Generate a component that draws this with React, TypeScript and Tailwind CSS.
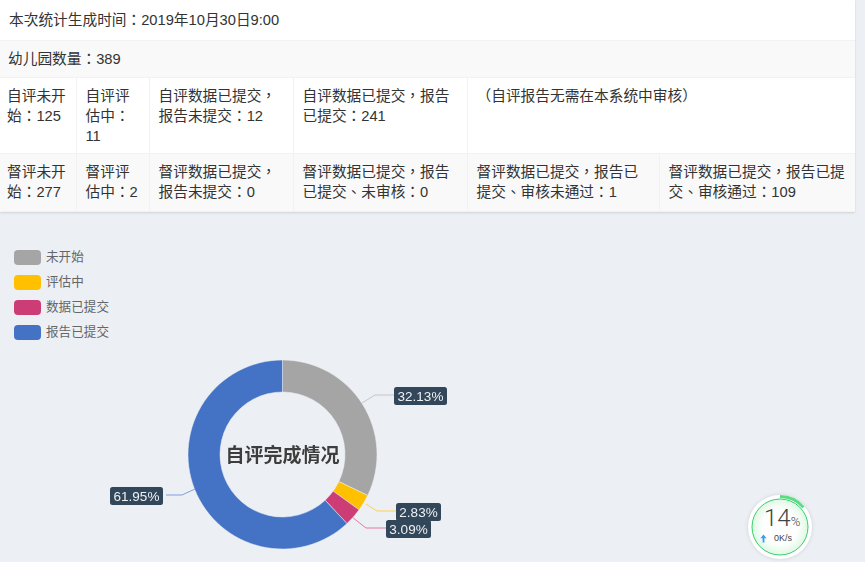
import React from "react";

const FONT = '"Liberation Sans", "Noto Sans CJK TC", sans-serif';
const CX = 282.5;
const CY = 454.5;
const R1 = 94.5;
const R0 = 62.5;

const slices = [
  { v: 32.13, c: "#a5a5a5" },
  { v: 2.83, c: "#ffc000" },
  { v: 3.09, c: "#cc3d76" },
  { v: 61.95, c: "#4472c4" },
];

function pt(r: number, pct: number) {
  const a = (pct / 100) * Math.PI * 2;
  return [CX + r * Math.sin(a), CY - r * Math.cos(a)];
}

function slicePath(from: number, to: number) {
  const large = to - from > 50 ? 1 : 0;
  const [a, b] = pt(R1, from);
  const [c, d] = pt(R1, to);
  const [e, f] = pt(R0, to);
  const [g, h] = pt(R0, from);
  return `M${a} ${b}A${R1} ${R1} 0 ${large} 1 ${c} ${d}L${e} ${f}A${R0} ${R0} 0 ${large} 0 ${g} ${h}Z`;
}

const legend = [
  { t: "未开始", c: "bg-[#a5a5a5]" },
  { t: "评估中", c: "bg-[#ffc000]" },
  { t: "数据已提交", c: "bg-[#cc3d76]" },
  { t: "报告已提交", c: "bg-[#4472c4]" },
];

const labels = [
  { t: "32.13%", x: 394, y: 387, w: 53, line: "M362 403L375 395H394", c: "#c4c4c4" },
  { t: "2.83%", x: 396, y: 503, w: 45, line: "M366 504L377 511H396", c: "#ffd04d" },
  { t: "3.09%", x: 386, y: 520, w: 45, line: "M352 517L366 528H386", c: "#e07aa2" },
  { t: "61.95%", x: 110, y: 487, w: 53, line: "M195 489L182 495H166", c: "#7f9fdb" },
];

function Td({ children, colSpan }: { children?: React.ReactNode; colSpan?: number }) {
  return (
    <td colSpan={colSpan} className="border border-[#f1f2f4] pb-[5px] pl-[9px] pr-2 pt-[8px] align-top leading-5 first:border-l-0 first:pl-[7px] last:border-r-0">
      {children}
    </td>
  );
}

export default function App() {
  let acc = 0;
  return (
    <div className="relative h-[562px] w-[865px] overflow-hidden bg-[#ecf0f5] text-[14.7px] text-[#333]" style={{ fontFamily: FONT }}>
      <table className="w-[855px] table-fixed border-collapse bg-white shadow-[0_1px_2px_rgba(0,0,0,0.12)]">
        <colgroup>
          <col className="w-[76px]" />
          <col className="w-[73px]" />
          <col className="w-[144px]" />
          <col className="w-[174px]" />
          <col className="w-[192px]" />
          <col className="w-[196px]" />
        </colgroup>
        <tbody>
          <tr className="h-[40px]">
            <td colSpan={6} className="border-b border-[#f1f2f4] pl-[9px] align-middle leading-5">本次统计生成时间：2019年10月30日9:00</td>
          </tr>
          <tr className="h-[37px] bg-[#f9f9f9]">
            <td colSpan={6} className="border-b border-[#f1f2f4] pl-[8px] align-middle leading-5">幼儿园数量：389</td>
          </tr>
          <tr className="h-[76px]">
            <Td>自评未开始：125</Td>
            <Td>自评评估中：11</Td>
            <Td>自评数据已提交，报告未提交：12</Td>
            <Td>自评数据已提交，报告已提交：241</Td>
            <Td colSpan={2}>（自评报告无需在本系统中审核）</Td>
          </tr>
          <tr className="h-[58px] bg-[#f9f9f9]">
            <Td>督评未开始：277</Td>
            <Td>督评评估中：2</Td>
            <Td>督评数据已提交，报告未提交：0</Td>
            <Td>督评数据已提交，报告已提交、未审核：0</Td>
            <Td>督评数据已提交，报告已提交、审核未通过：1</Td>
            <Td>督评数据已提交，报告已提交、审核通过：109</Td>
          </tr>
        </tbody>
      </table>

      <div className="ml-[14px] mt-[38px] flex flex-col gap-[9px]">
        {legend.map((l) => (
          <div key={l.t} className="flex h-[16px] items-center gap-[5px] text-[12.6px] text-[#666]">
            <span className={`h-[15px] w-[27px] rounded-[4px] ${l.c}`} />
            <span>{l.t}</span>
          </div>
        ))}
      </div>

      <svg className="absolute left-0 top-0 blur-[0.3px]" width="865" height="562">
        {slices.map((s) => {
          const from = acc;
          acc += s.v;
          return <path key={s.c} d={slicePath(from, acc)} fill={s.c} stroke="#ecf0f5" strokeWidth="0.5" />;
        })}
        {labels.map((l) => (
          <g key={l.t}>
            <path d={l.line} fill="none" stroke={l.c} strokeWidth="1" />
            <rect x={l.x} y={l.y} width={l.w} height="18" rx="2.5" fill="#33475b" />
            <text x={l.x + l.w / 2} y={l.y + 14} textAnchor="middle" fontSize="13.5" fill="#eef0f3" fontFamily={FONT}>
              {l.t}
            </text>
          </g>
        ))}
        <text x={CX} y="462" textAnchor="middle" fontSize="19" fontWeight="700" fill="#3d3d3d" fontFamily={FONT}>
          自评完成情况
        </text>
      </svg>

      <div className="absolute left-[748px] top-[495px] h-[64px] w-[64px] rounded-full bg-white shadow-[0_0_4px_rgba(0,0,0,0.12)]">
        <svg className="absolute left-0 top-0" width="64" height="64">
          <defs>
            <radialGradient id="speedFill">
              <stop offset="60%" stopColor="#ffffff" />
              <stop offset="100%" stopColor="#dff8e4" />
            </radialGradient>
          </defs>
          <circle cx="32" cy="32" r="28" fill="url(#speedFill)" stroke="#35d06c" strokeWidth="1" />
          <path d="M32 1.5A30.5 30.5 0 0 1 55.4 12.4" fill="none" stroke="#55df80" strokeWidth="3" />
        </svg>
        <div className="absolute left-[16px] top-[9px] flex items-baseline text-[#444]">
          <span className="font-['Roboto'] text-[24px] font-light leading-7">14</span>
          <span className="font-['Roboto'] text-[13px] font-light leading-5">%</span>
        </div>
        <div className="absolute left-[12px] top-[37px] flex items-center gap-[7px] text-[9px] leading-3 text-[#444]">
          <svg width="7" height="9" viewBox="0 0 7 9">
            <path d="M3.5 0.5L6.5 4.2H4.4V8.5H2.6V4.2H0.5Z" fill="#3b9bf5" />
          </svg>
          <span>0K/s</span>
        </div>
      </div>
    </div>
  );
}
